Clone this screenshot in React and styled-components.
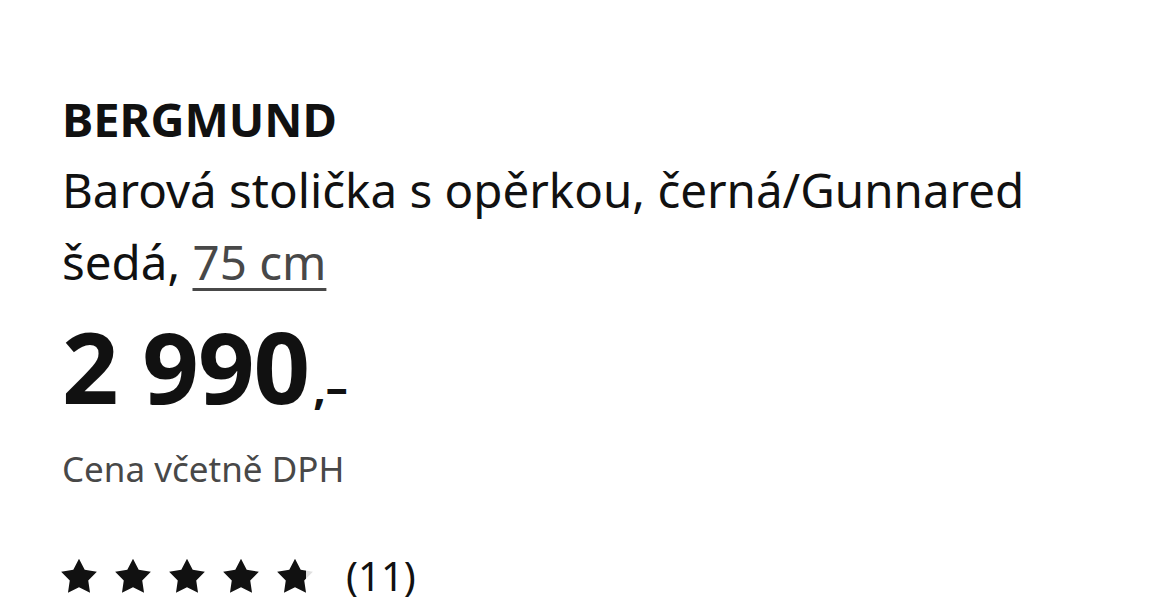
import styled, { createGlobalStyle } from 'styled-components';

const GlobalStyle = createGlobalStyle`
    html, body {
        margin:0;
        padding:0;
        background:#fff;
    }
    body{
        font-family:"Noto Sans", "Open Sans", sans-serif;
        color:#111111;
    }
`

const StyledProduct = styled.div`
    padding:94px 62px 0 62px;
    width:1000px;
`

const Name = styled.h1`
    margin:0;
    font-size:47px;
    line-height:50px;
    font-weight:700;
    color:#111111;
`

const Desc = styled.p`
    margin:10px 0 0 0;
    font-size:47.5px;
    line-height:72px;
    font-weight:400;
    color:#111111;
    & a{
        color:#484848;
        text-decoration:underline;
        text-decoration-thickness:3px;
        text-underline-offset:8px;
    }
`

const Price = styled.div`
    margin-top:18px;
    display:flex;
    align-items:baseline;
    font-weight:700;
    color:#111111;
    & .int{
        font-size:99px;
        line-height:100px;
        letter-spacing:-1px;
    }
    & .dec{
        font-size:44px;
        margin-left:4px;
    }
`

const Vat = styled.p`
    margin:32px 0 0 0;
    font-size:35px;
    line-height:40px;
    color:#484848;
`

const Rating = styled.div`
    margin-top:65px;
    display:flex;
    align-items:center;
    gap:20px;
`

const Stars = styled.div`
    display:flex;
    gap:16px;
    margin-left:-2px;
`

const Count = styled.span`
    margin-left:12px;
    font-size:40px;
    line-height:44px;
    color:#111111;
`

const Star = ({ fill = 1, id }) => (
    <svg width="38" height="36" viewBox="0 0 24 23">
        <defs>
            <linearGradient id={id} x1="0" x2="1" y1="0" y2="0">
                <stop offset={fill} stopColor="#111111" />
                <stop offset={fill} stopColor="#dfdfdf" />
            </linearGradient>
        </defs>
        <path
            d="M12 0.5L15.64 7.48L23.41 8.79L17.9 14.42L19.05 22.21L12 18.7L4.95 22.21L6.1 14.42L0.59 8.79L8.36 7.48Z"
            fill={`url(#${id})`}
        />
    </svg>
)

const App = () => {
    return (
        <>
            <GlobalStyle />
            <StyledProduct>
                <Name>BERGMUND</Name>
                <Desc>
                    Barová stolička s opěrkou, černá/Gunnared šedá, <a href="#">75 cm</a>
                </Desc>
                <Price>
                    <span className='int'>2 990</span>
                    <span className='dec'>,–</span>
                </Price>
                <Vat>Cena včetně DPH</Vat>
                <Rating>
                    <Stars>
                        {[1, 1, 1, 1, 0.82].map((f, i) => (
                            <Star key={i} fill={f} id={`star-${i}`} />
                        ))}
                    </Stars>
                    <Count>(11)</Count>
                </Rating>
            </StyledProduct>
        </>
    )
}

export default App
